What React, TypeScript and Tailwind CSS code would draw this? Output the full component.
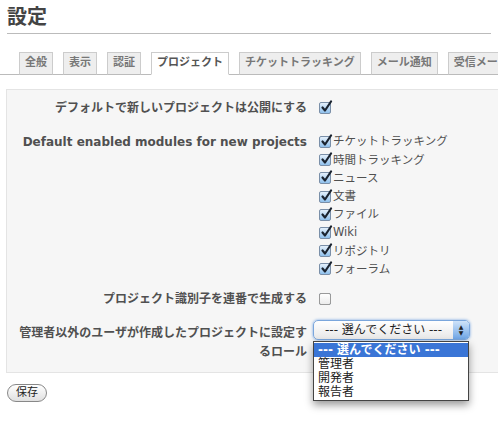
import React from 'react';

const font = '"DejaVu Sans", "Noto Sans CJK JP", sans-serif';

function Check({ on }: { on: boolean }) {
  return (
    <span className="relative inline-block w-[12px] h-[12px] shrink-0 rounded-[2px] border border-[#7a8fa8] bg-gradient-to-b from-[#e4f0fb] to-[#8fc0ec]">
      {!on && <span className="absolute inset-[-1px] rounded-[2px] border border-[#9a9a9a] bg-gradient-to-b from-white to-[#ececec]" />}
      {on && (
        <svg className="absolute left-[0px] top-[-3px]" width="13" height="13" viewBox="0 0 13 13">
          <path d="M2.5 7.5 L5 10.5 L11 1.5" fill="none" stroke="#1b2430" strokeWidth="2.2" strokeLinecap="round" strokeLinejoin="round" />
        </svg>
      )}
    </span>
  );
}

const tabs = ['全般', '表示', '認証', 'プロジェクト', 'チケットトラッキング', 'メール通知', '受信メール'];
const modules = ['チケットトラッキング', '時間トラッキング', 'ニュース', '文書', 'ファイル', 'Wiki', 'リポジトリ', 'フォーラム'];

export default function App() {
  return (
    <div className="relative w-[498px] h-[430px] overflow-hidden bg-white text-[#505050]" style={{ fontFamily: font }}>
      <h2 className="mx-[7px] pt-[6px] pb-[4px] text-[20px] leading-[23px] font-bold text-[#444] border-b border-[#bbb]">設定</h2>

      <ul className="flex items-end gap-[10px] mt-[17px] pl-[19px] border-b border-[#bbb] h-[24px] whitespace-nowrap">
        {tabs.map((t, i) => (
          <li
            key={t}
            className={`px-[5px] h-[23px] -mb-px flex items-center shrink-0 text-[11px] font-bold border border-[#ccc] ${
              i === 3 ? 'bg-white border-b-white text-[#555]' : 'bg-[#eee] border-b-[#bbb] text-[#777]'
            }`}
          >
            {t}
          </li>
        ))}
      </ul>

      <div className="ml-[6px] mt-[14px] mr-[-10px] h-[284px] bg-[#f6f6f6] border border-[#e4e4e4] pt-[9px] text-[12px]">
        <div className="grid grid-cols-[300px_1fr] gap-x-[12px] items-start">
          <div className="text-right font-bold leading-[18px]">デフォルトで新しいプロジェクトは公開にする</div>
          <div className="h-[18px] flex items-center"><Check on /></div>

          <div className="mt-[16px] text-right font-bold leading-[18px]">Default enabled modules for new projects</div>
          <div className="mt-[16px] flex flex-col">
            {modules.map((m) => (
              <div key={m} className="h-[18.2px] flex items-center gap-[2px]">
                <Check on />
                <span className="text-[11.5px]">{m}</span>
              </div>
            ))}
          </div>

          <div className="mt-[11px] text-right font-bold leading-[18px]">プロジェクト識別子を連番で生成する</div>
          <div className="mt-[11px] h-[18px] flex items-center"><Check on={false} /></div>

          <div className="mt-[16px] text-right font-bold leading-[19px] pl-[8px]">管理者以外のユーザが作成したプロジェクトに設定するロール</div>
          <div className="mt-[12px] -ml-[6px]">
            <div className="w-[157px] h-[20px] rounded-[5px] border border-[#7aa6dc] shadow-[0_0_3px_#6fa0e0] bg-gradient-to-b from-white to-[#e8e8e8] flex items-center text-[12px] text-[#222]">
              <span className="flex-1 text-center">--- 選んでください ---</span>
              <span className="w-[16px] h-full rounded-r-[4px] bg-gradient-to-b from-[#cfe3f8] to-[#6fa6e6] flex flex-col items-center justify-center text-[6px] leading-[6px] text-[#222]">
                <span>▲</span>
                <span>▼</span>
              </span>
            </div>
          </div>
        </div>
      </div>

      <button className="ml-[7px] mt-[11px] h-[18px] px-[8px] rounded-full border border-[#888] bg-gradient-to-b from-white to-[#e0e0e0] text-[11px] leading-[16px] text-[#222]">
        保存
      </button>

      <div className="absolute left-[313px] top-[341px] w-[156px] bg-white border border-[#444] shadow-[0_4px_8px_rgba(0,0,0,0.4)] text-[12px] leading-[14px] text-[#222] py-[1px]">
        <div className="bg-[#3a75d6] text-white font-bold px-[4px] h-[14px]">--- 選んでください ---</div>
        <div className="px-[4px]">管理者</div>
        <div className="px-[4px]">開発者</div>
        <div className="px-[4px]">報告者</div>
      </div>
    </div>
  );
}
